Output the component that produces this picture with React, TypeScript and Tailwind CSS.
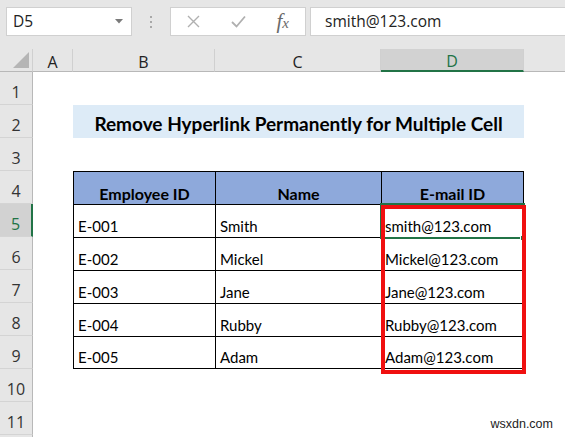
import React from "react";

const data = [
  ["E-001", "Smith", "smith@123.com"],
  ["E-002", "Mickel", "Mickel@123.com"],
  ["E-003", "Jane", "Jane@123.com"],
  ["E-004", "Rubby", "Rubby@123.com"],
  ["E-005", "Adam", "Adam@123.com"],
];

const cols = "grid grid-cols-[40px_142px_166px_143px_1fr]";

function RowHeader({ n, active }: { n: number; active?: boolean }) {
  return (
    <div
      className={
        "h-[33px] flex items-end justify-center pb-[1px] border-b border-[#d4d4d4] text-[16px] leading-[22px] " +
        (active
          ? "bg-[#d2d2d2] text-[#217346] border-r-2 border-r-[#217346]"
          : "bg-[#e6e6e6] text-[#333333] border-r border-r-[#b8b8b8]")
      }
    >
      {n > 11 ? "" : n}
    </div>
  );
}

function ColHeader({ label, w, active, last }: { label: string; w: string; active?: boolean; last?: boolean }) {
  return (
    <div
      className={
        w +
        " h-[23px] flex items-center justify-center pt-[3px] text-[16px] " +
        (last ? "" : "border-r border-r-[#d0d0d0] ") +
        (active
          ? "bg-[#d2d2d2] text-[#217346] border-b-2 border-b-[#217346]"
          : "bg-[#e6e6e6] text-[#222222] border-b border-b-[#b8b8b8]")
      }
    >
      {label}
    </div>
  );
}

export default function App() {
  return (
    <div className="relative w-[565px] h-[437px] overflow-hidden bg-white font-['Open_Sans',sans-serif]">
      {/* formula bar */}
      <div className="h-[49px] bg-[#e6e6e6] flex items-start pt-[7px]">
        <div className="ml-[6px] w-[126px] h-[29px] bg-white border border-[#d0d0d0] flex items-center justify-between pl-[6px] pr-[8px]">
          <span className="text-[15.5px] text-[#222]">D5</span>
          <svg width="8" height="5" viewBox="0 0 8 5">
            <path d="M0 0 L8 0 L4 4.5 Z" fill="#7a7a7a" />
          </svg>
        </div>
        <div className="w-[38px] h-[29px] flex flex-col items-center justify-center gap-[3px]">
          <div className="w-[2px] h-[2px] bg-[#a8a8a8]" />
          <div className="w-[2px] h-[2px] bg-[#a8a8a8]" />
          <div className="w-[2px] h-[2px] bg-[#a8a8a8]" />
        </div>
        <div className="w-[136px] h-[29px] bg-white border border-[#d0d0d0] flex items-center">
          <div className="w-[45px] flex justify-center">
            <svg width="13" height="13" viewBox="0 0 13 13">
              <path d="M1 1 L12 12 M12 1 L1 12" stroke="#b0b0b0" strokeWidth="1.4" />
            </svg>
          </div>
          <div className="w-[45px] flex justify-center">
            <svg width="15" height="13" viewBox="0 0 15 13">
              <path d="M1 7 L5.5 11.5 L14 1.5" stroke="#b0b0b0" strokeWidth="1.8" fill="none" />
            </svg>
          </div>
          <div className="w-[45px] flex justify-center">
            <span className="font-['Liberation_Serif',serif] italic text-[21px] text-[#6a6a6a] leading-none">
              f<span className="text-[15px]">x</span>
            </span>
          </div>
        </div>
        <div className="ml-[4px] flex-1 h-[29px] bg-white border border-r-0 border-[#d0d0d0] flex items-center pl-[14px]">
          <span className="text-[15.5px] text-[#222]">smith@123.com</span>
        </div>
      </div>

      {/* column headers */}
      <div className="flex">
        <div className="w-[33px] h-[23px] bg-[#e6e6e6] border-r border-r-[#d0d0d0] border-b border-b-[#b8b8b8] flex items-end justify-end pr-[3px] pb-[3px]">
          <svg width="16" height="16" viewBox="0 0 16 16">
            <path d="M16 0 L16 16 L0 16 Z" fill="#b5b5b5" />
          </svg>
        </div>
        <ColHeader label="A" w="w-[40px]" />
        <ColHeader label="B" w="w-[142px]" />
        <ColHeader label="C" w="w-[166px]" />
        <ColHeader label="D" w="w-[143px]" active />
        <ColHeader label="" w="flex-1" last />
      </div>

      {/* body */}
      <div className="flex">
        <div className="w-[33px] flex flex-col">
          {[1, 2, 3, 4, 5, 6, 7, 8, 9, 10, 11, 12].map((n) => (
            <RowHeader key={n} n={n} active={n === 5} />
          ))}
        </div>
        <div className="flex-1 flex flex-col font-['Lato',sans-serif] text-black">
          <div className={cols + " h-[33px]"} />
          <div className={cols + " h-[33px]"}>
            <div />
            <div className="col-span-3 bg-[#ddebf7] flex items-end justify-center pb-[3px] font-bold text-[19px] leading-[22px]">
              Remove Hyperlink Permanently for Multiple Cell
            </div>
          </div>
          <div className={cols + " h-[33px]"} />
          <div className={cols + " h-[33px]"}>
            <div />
            {["Employee ID", "Name", "E-mail ID"].map((h, i) => (
              <div
                key={h}
                className={
                  "bg-[#8ea9db] border-t border-l border-black flex items-end justify-center pb-[0px] font-bold text-[16px] leading-[20px] " +
                  (i === 2 ? "border-r" : "")
                }
              >
                {h}
              </div>
            ))}
          </div>
          {data.map((r, ri) => (
            <div key={ri} className={cols + " h-[33px]"}>
              <div />
              {r.map((c, i) => (
                <div
                  key={i}
                  className={
                    "border-t border-l border-black flex items-end pb-[1px] text-[15px] leading-[20px] " +
                    (i === 0 || i === 1 ? "pl-[4px] " : "pl-[3px] ") +
                    (i === 2 ? "border-r " : "") +
                    (ri === data.length - 1 ? "border-b" : "")
                  }
                >
                  {c}
                </div>
              ))}
            </div>
          ))}
        </div>
      </div>

      {/* selection D5 */}
      <div className="absolute left-[380px] top-[203px] w-[145px] h-[36px] border-2 border-[#217346]" />
      <div className="absolute left-[520px] top-[235px] w-[6px] h-[6px] bg-[#217346] border border-white" />
      {/* red highlight */}
      <div className="absolute left-[381px] top-[205px] w-[145px] h-[169px] border-4 border-[#f01010]" />

      <div className="absolute right-[12px] bottom-[3px] font-['Liberation_Sans',sans-serif] text-[12.5px] text-[#222]">
        wsxdn.com
      </div>
    </div>
  );
}
